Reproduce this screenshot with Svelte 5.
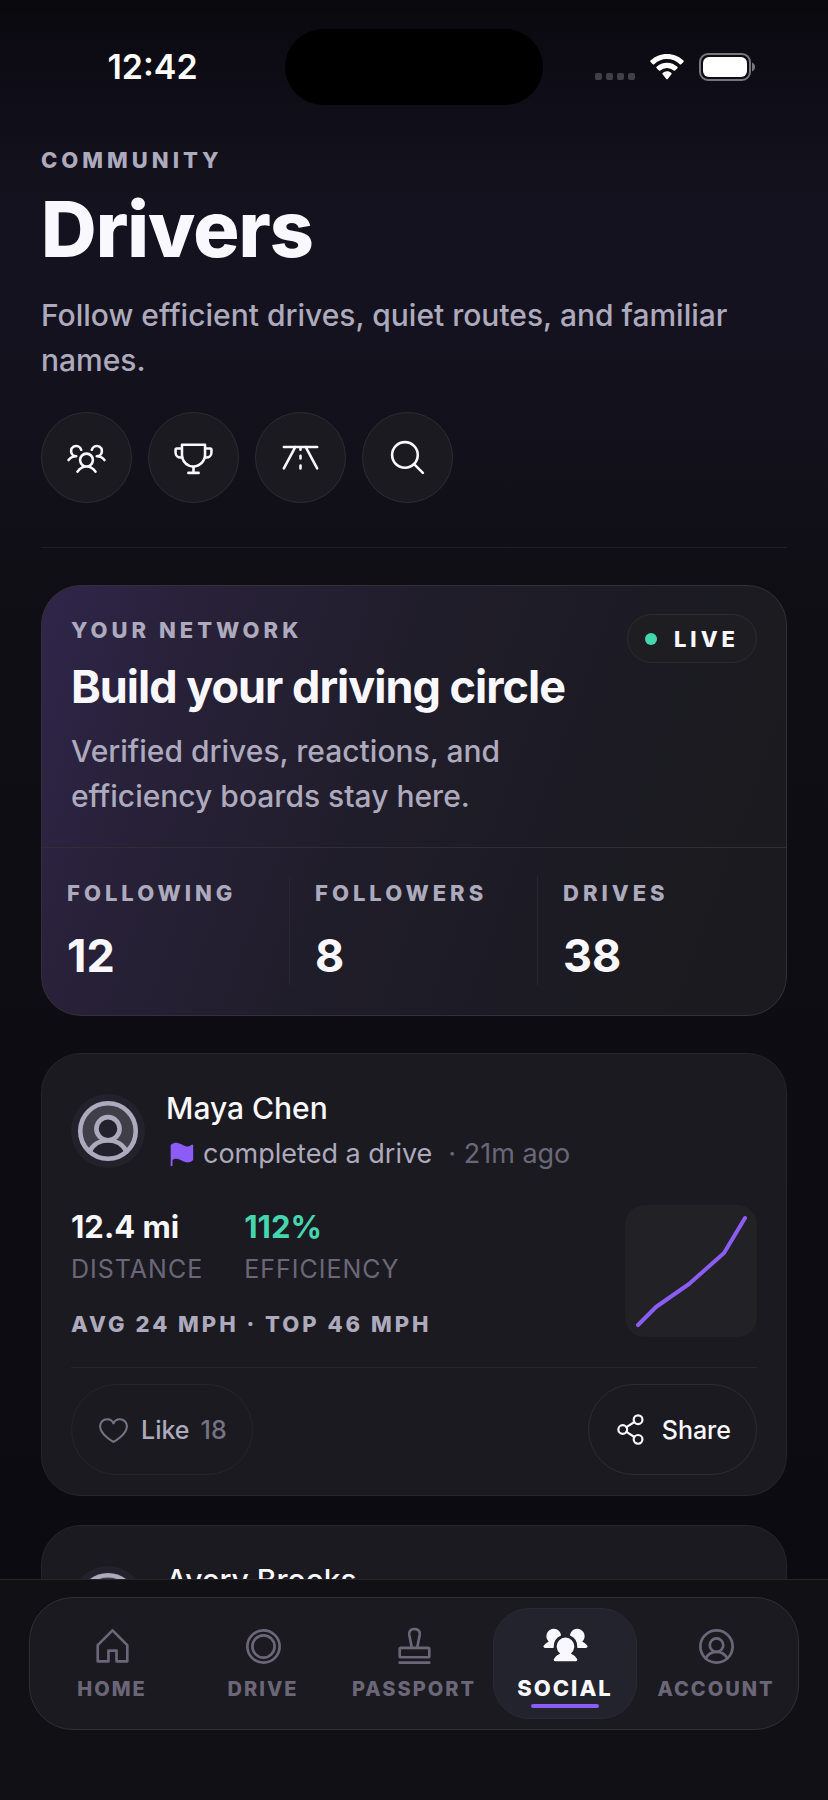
<script lang="ts">
  type IconName =
    | "users"
    | "usersFill"
    | "trophy"
    | "road"
    | "search"
    | "heart"
    | "share"
    | "flag"
    | "person"
    | "home"
    | "drive"
    | "stamp";

  type Drive = {
    driver: string;
    time: string;
    details?: {
      distance: string;
      efficiency: string;
      speeds: string;
      likes: number;
      route: [number, number][];
    };
  };

  const actions: { icon: IconName; label: string }[] = [
    { icon: "users", label: "Friends" },
    { icon: "trophy", label: "Leaderboard" },
    { icon: "road", label: "Routes" },
    { icon: "search", label: "Search" },
  ];

  const stats = [
    { label: "Following", value: 12 },
    { label: "Followers", value: 8 },
    { label: "Drives", value: 38 },
  ];

  const tabs: { id: string; icon: IconName; label: string }[] = [
    { id: "home", icon: "home", label: "Home" },
    { id: "drive", icon: "drive", label: "Drive" },
    { id: "passport", icon: "stamp", label: "Passport" },
    { id: "social", icon: "usersFill", label: "Social" },
    { id: "account", icon: "person", label: "Account" },
  ];

  const drives: Drive[] = [
    {
      driver: "Maya Chen",
      time: "21m ago",
      details: {
        distance: "12.4 mi",
        efficiency: "112%",
        speeds: "Avg 24 mph · Top 46 mph",
        likes: 18,
        route: [[13, 120], [31, 102], [64, 79], [99, 48], [120, 13]],
      },
    },
    { driver: "Avery Brooks", time: "" },
  ];

  let activeTab = $state("social");
</script>

{#snippet icon(name: IconName)}
  <svg class="icon" viewBox="0 0 256 256" aria-hidden="true">
    {#if name === "users"}
      <path class="solid" d="M244.8,150.4a8,8,0,0,1-11.2-1.6A51.6,51.6,0,0,0,192,128a8,8,0,0,1-7.37-4.89,8,8,0,0,1,0-6.22A8,8,0,0,1,192,112a24,24,0,1,0-23.24-30,8,8,0,1,1-15.5-4A40,40,0,1,1,219,117.51a67.94,67.94,0,0,1,27.43,21.68A8,8,0,0,1,244.8,150.4ZM190.92,212a8,8,0,1,1-13.84,8,57,57,0,0,0-98.16,0,8,8,0,1,1-13.84-8,72.06,72.06,0,0,1,33.74-29.92,48,48,0,1,1,58.36,0A72.06,72.06,0,0,1,190.92,212ZM128,176a32,32,0,1,0-32-32A32,32,0,0,0,128,176ZM72,120a8,8,0,0,0-8-8A24,24,0,1,1,87.24,82a8,8,0,1,0,15.5-4A40,40,0,1,0,37,117.51,67.94,67.94,0,0,0,9.6,139.19a8,8,0,1,0,12.8,9.61A51.6,51.6,0,0,1,64,128,8,8,0,0,0,72,120Z" />
    {:else if name === "usersFill"}
      <path class="solid" d="M64.12,147.8a4,4,0,0,1-4,4.2H16a8,8,0,0,1-7.8-6.17,8.35,8.35,0,0,1,1.62-6.93A67.79,67.79,0,0,1,37,117.51a40,40,0,1,1,66.46-35.8,3.94,3.94,0,0,1-2.27,4.18A64.08,64.08,0,0,0,64,144C64,145.28,64,146.54,64.12,147.8Zm182-8.91A67.76,67.76,0,0,0,219,117.51a40,40,0,1,0-66.46-35.8,3.94,3.94,0,0,0,2.27,4.18A64.08,64.08,0,0,1,192,144c0,1.28,0,2.54-.12,3.8a4,4,0,0,0,4,4.2H240a8,8,0,0,0,7.8-6.17A8.33,8.33,0,0,0,246.17,138.89Zm-89,43.18a48,48,0,1,0-58.37,0A72.13,72.13,0,0,0,65.07,212,8,8,0,0,0,72,224H184a8,8,0,0,0,6.93-12A72.15,72.15,0,0,0,157.12,182.07Z" />
    {:else if name === "trophy"}
      <path class="solid" d="M232,64H208V48a8,8,0,0,0-8-8H56a8,8,0,0,0-8,8V64H24A16,16,0,0,0,8,80V96a40,40,0,0,0,40,40h3.65A80.13,80.13,0,0,0,120,191.61V216H96a8,8,0,0,0,0,16h64a8,8,0,0,0,0-16H136V191.58c31.94-3.23,58.44-25.64,68.08-55.58H208a40,40,0,0,0,40-40V80A16,16,0,0,0,232,64ZM48,120A24,24,0,0,1,24,96V80H48v32q0,4,.39,8Zm144-8.9c0,35.52-29,64.64-64,64.9a64,64,0,0,1-64-64V56H192ZM232,96a24,24,0,0,1-24,24h-.5a81.81,81.81,0,0,0,.5-8.9V80h24Z" />
    {:else if name === "road"}
      <path d="M24 62H232M96 62 24 196M160 62l72 134M128 64v16M128 118v16M128 178v18" />
    {:else if name === "search"}
      <circle cx="112" cy="112" r="80" />
      <path d="m169 169 55 55" />
    {:else if name === "heart"}
      <path d="M128,224S24,168,24,102A54,54,0,0,1,78,48c22.59,0,41.94,12.31,50,32,8.06-19.69,27.41-32,50-32a54,54,0,0,1,54,54C232,168,128,224,128,224Z" />
    {:else if name === "share"}
      <circle cx="64" cy="128" r="32" />
      <circle cx="176" cy="200" r="32" />
      <circle cx="176" cy="56" r="32" />
      <path d="M91 145l58 38M149 73 91 111" />
    {:else if name === "flag"}
      <path class="solid" d="M232,56V176a8,8,0,0,1-2.76,6c-15.28,13.23-29.89,18-43.82,18-18.91,0-36.57-8.74-53-16.85C105.87,170,82.79,158.61,56,179.77V224a8,8,0,0,1-16,0V56a8,8,0,0,1,2.77-6h0c36-31.18,68.31-15.17,96.8-1.12C167.84,62.79,190.79,74.07,218.76,50A8,8,0,0,1,232,56Z" />
    {:else if name === "person"}
      <path class="tone" fill-rule="evenodd" d="M192.2,199.37a96,96,0,1,0-128.4,0A72,72,0,0,1,192.2,199.37ZM128,160a40,40,0,1,1,40-40A40,40,0,0,1,128,160Z" />
      <circle cx="128" cy="128" r="96" />
      <circle cx="128" cy="120" r="40" />
      <path d="M63.8,199.37a72,72,0,0,1,128.4,0" />
    {:else if name === "home"}
      <path d="M104,216V152h48v64h64V120L128,32,40,120v96Z" />
    {:else if name === "drive"}
      <circle cx="128" cy="128" r="96" />
      <circle cx="128" cy="128" r="66" />
    {:else if name === "stamp"}
      <path d="M40 224H216M112 136 96.500 56A28 28 0 0 1 124 24h8A28 28 0 0 1 159.500 56L144 136" />
      <rect x="40" y="136" width="176" height="56" rx="8" />
    {/if}
  </svg>
{/snippet}

<div class="app">
  <div class="status-bar">
    <time class="clock">12:42</time>
    <div class="island"></div>
    <div class="signals">
      <svg class="cellular" viewBox="0 0 40 28" aria-hidden="true">
        {#each [0, 11, 22, 33] as x}
          <rect {x} y="20" width="7" height="7" rx="2" />
        {/each}
      </svg>
      <svg class="wifi" viewBox="0 0 34 28" aria-hidden="true">
        <path d="M17 1c6.400 0 12.200 2.500 16.500 6.600.4.400.4 1 0 1.400l-2.300 2.300c-.4.400-1 .4-1.400 0A18.400 18.400 0 0 0 17 6.100c-5 0-9.500 2-12.800 5.200-.4.400-1 .4-1.400 0L.5 9c-.4-.4-.4-1 0-1.400C4.800 3.500 10.600 1 17 1Z" />
        <path d="M17 9.700c4 0 7.700 1.600 10.400 4.100.4.400.4 1 0 1.400L25.100 17.500c-.4.400-1 .4-1.400 0a9.900 9.900 0 0 0-13.400 0c-.4.400-1 .4-1.400 0l-2.300-2.300c-.4-.4-.4-1 0-1.400A15.200 15.200 0 0 1 17 9.700Z" />
        <path d="M17 18.300c1.700 0 3.200.6 4.400 1.600.4.400.4 1 0 1.400l-3.700 4.800c-.4.400-1 .4-1.400 0l-3.700-4.800c-.4-.4-.4-1 0-1.400a6.600 6.600 0 0 1 4.400-1.600Z" />
      </svg>
      <svg class="battery" viewBox="0 0 57 28" aria-hidden="true">
        <rect class="shell" x="1" y="1" width="50" height="26" rx="8" />
        <rect x="4" y="4" width="44" height="20" rx="6" />
        <path class="nub" d="M53 9.500c2 .8 3 2.500 3 4.500s-1 3.700-3 4.500Z" />
      </svg>
    </div>
  </div>

  <main class="content">
    <header class="page-head">
      <p class="kicker">Community</p>
      <h1>Drivers</h1>
      <p class="body-text">Follow efficient drives, quiet routes, and familiar names.</p>
      <div class="actions">
        {#each actions as action}
          <button class="round-btn" type="button" aria-label={action.label}>
            {@render icon(action.icon)}
          </button>
        {/each}
      </div>
    </header>

    <section class="network">
      <div class="network-top">
        <div class="network-copy">
          <p class="kicker">Your network</p>
          <h2>Build your driving circle</h2>
          <p class="body-text">Verified drives, reactions, and efficiency boards stay here.</p>
        </div>
        <span class="live"><span class="live-dot"></span>Live</span>
      </div>
      <div class="stats">
        {#each stats as stat}
          <div class="stat">
            <div class="kicker">{stat.label}</div>
            <div class="stat-value">{stat.value}</div>
          </div>
        {/each}
      </div>
    </section>

    <div class="feed">
      {#each drives as drive}
        <article class="card">
          <div class="card-head">
            <div class="avatar">{@render icon("person")}</div>
            <div class="who">
              <div class="name">{drive.driver}</div>
              {#if drive.time}
                <div class="event">
                  <span class="flag">{@render icon("flag")}</span>
                  <span>completed a drive</span>
                  <span class="ago">· {drive.time}</span>
                </div>
              {/if}
            </div>
          </div>

          {#if drive.details}
            <div class="summary">
              <div>
                <div class="metrics">
                  <div>
                    <div class="metric-value">{drive.details.distance}</div>
                    <div class="metric-label">Distance</div>
                  </div>
                  <div>
                    <div class="metric-value good">{drive.details.efficiency}</div>
                    <div class="metric-label">Efficiency</div>
                  </div>
                </div>
                <div class="kicker speeds">{drive.details.speeds}</div>
              </div>
              <svg class="route" viewBox="0 0 132 132" aria-hidden="true">
                <polyline points={drive.details.route.map((p) => p.join(",")).join(" ")} />
              </svg>
            </div>

            <div class="card-actions">
              <button class="pill-btn like" type="button">
                {@render icon("heart")}
                <span>Like</span>
                <span class="count">{drive.details.likes}</span>
              </button>
              <button class="pill-btn share" type="button">
                {@render icon("share")}
                <span>Share</span>
              </button>
            </div>
          {/if}
        </article>
      {/each}
    </div>
  </main>

  <div class="tab-area">
    <nav class="tabs">
      {#each tabs as tab}
        <a
          class="tab"
          class:active={activeTab === tab.id}
          href="#{tab.id}"
          onclick={() => (activeTab = tab.id)}
        >
          {@render icon(tab.icon)}
          <span class="tab-label">{tab.label}</span>
          {#if activeTab === tab.id}
            <span class="tab-line"></span>
          {/if}
        </a>
      {/each}
    </nav>
  </div>
</div>

<style>
  :global(body) {
    background: #0c0b11;
  }

  .app {
    --text: #faf8ff;
    --muted: #aeaabd;
    --dim: #6b6778;
    --accent: #8b5cf6;
    --good: #45d6b0;
    --card: #1b1a20;
    --line: #2d2c32;
    --line-soft: #26252b;
    display: flex;
    flex-direction: column;
    height: 100vh;
    overflow: hidden;
    background: linear-gradient(180deg, #09090c 0, #0c0b13 40px, #14121e 200px, #14121e 340px, #0f0e14 620px, #0b0a10 100%);
    color: var(--text);
    font-family: Inter, "Liberation Sans", sans-serif;
  }

  .app :global(*) {
    box-sizing: border-box;
  }

  h1,
  h2,
  p {
    margin: 0;
  }

  button {
    font: inherit;
    color: inherit;
    cursor: pointer;
  }

  .icon {
    display: block;
    flex: none;
    width: 41px;
    height: 41px;
    fill: none;
    stroke: currentColor;
    stroke-width: 16;
    stroke-linecap: round;
    stroke-linejoin: round;
  }

  .icon .solid {
    fill: currentColor;
    stroke: none;
  }

  .icon .tone {
    fill: none;
    stroke: none;
  }

  /* status bar */
  .status-bar {
    flex: none;
    display: grid;
    grid-template-columns: 1fr 258px 1fr;
    align-items: center;
    height: 134px;
  }

  .clock {
    justify-self: center;
    padding-left: 20px;
    font-size: 34px;
    line-height: 40px;
    font-weight: 600;
    color: #fff;
  }

  .island {
    height: 76px;
    border-radius: 38px;
    background: #000;
  }

  .signals {
    display: flex;
    align-items: center;
    justify-content: flex-end;
    gap: 15px;
    padding-right: 72px;
    fill: #fff;
  }

  .signals svg {
    flex: none;
    height: 28px;
  }

  .cellular {
    width: 40px;
    fill: #413f49;
  }

  .wifi {
    width: 34px;
  }

  .battery {
    width: 57px;
  }

  .battery .shell {
    fill: none;
    stroke: #77757e;
    stroke-width: 2;
  }

  .battery .nub {
    fill: #77757e;
  }

  /* page */
  .content {
    flex: 1;
    min-height: 0;
    overflow: hidden;
    padding: 12px 41px 0;
  }

  .kicker {
    font-size: 22px;
    line-height: 28px;
    font-weight: 800;
    letter-spacing: 4px;
    text-transform: uppercase;
    color: var(--muted);
  }

  .body-text {
    font-size: 30px;
    line-height: 45px;
    font-weight: 500;
    color: var(--muted);
  }

  .page-head {
    padding-bottom: 44px;
    border-bottom: 1px solid #1f1e28;
  }

  h1 {
    margin: 13px 0 22px;
    font-size: 77px;
    line-height: 84px;
    font-weight: 800;
    letter-spacing: -1px;
  }

  .actions {
    display: flex;
    gap: 16px;
    margin-top: 29px;
  }

  .round-btn {
    display: grid;
    place-items: center;
    width: 91px;
    height: 91px;
    padding: 0;
    border: 1px solid var(--line);
    border-radius: 50%;
    background: var(--card);
  }

  /* network card */
  .network {
    margin-top: 37px;
    border: 1px solid #323038;
    border-radius: 40px;
    background: linear-gradient(110deg, #2f264b 0%, #282139 18%, #201d2a 45%, #1c1b24 68%, #1b1b1f 88%);
  }

  .network-top {
    display: flex;
    justify-content: space-between;
    align-items: flex-start;
    padding: 28px 29px;
    border-bottom: 1px solid #2f2d36;
  }

  .network-copy {
    max-width: 500px;
    padding-top: 2px;
  }

  h2 {
    margin: 16px 0 15px;
    font-size: 45px;
    line-height: 54px;
    font-weight: 700;
    letter-spacing: -1px;
    white-space: nowrap;
  }

  .live {
    display: flex;
    align-items: center;
    gap: 17px;
    height: 49px;
    padding: 0 17px;
    border: 1px solid var(--line);
    border-radius: 25px;
    background: #1e1e22;
    font-size: 22px;
    font-weight: 800;
    letter-spacing: 4px;
    text-transform: uppercase;
  }

  .live-dot {
    width: 12px;
    height: 12px;
    border-radius: 50%;
    background: var(--good);
  }

  .stats {
    display: grid;
    grid-template-columns: repeat(3, 1fr);
    padding: 29px 0 30px;
  }

  .stat {
    padding: 2px 0 2px 25px;
    border-right: 1px solid #292731;
  }

  .stat:last-child {
    border-right: 0;
  }

  .stat-value {
    margin-top: 22px;
    font-size: 45px;
    line-height: 54px;
    font-weight: 700;
  }

  /* feed */
  .feed {
    display: flex;
    flex-direction: column;
    gap: 29px;
    margin-top: 37px;
  }

  .card {
    padding: 32px 29px 20px;
    border: 1px solid var(--line-soft);
    border-radius: 40px;
    background: var(--card);
  }

  .card-head {
    display: flex;
    align-items: flex-start;
    gap: 21px;
    line-height: 45px;
  }

  .avatar {
    margin: 8px 0;
    border-radius: 50%;
    background: #23222c;
    color: var(--muted);
  }

  .avatar :global(.icon) {
    width: 74px;
    height: 74px;
  }

  .avatar :global(.tone) {
    fill: #403e49;
  }

  .name {
    font-size: 30px;
    font-weight: 500;
  }

  .event {
    display: flex;
    align-items: center;
    gap: 7px;
    font-size: 27px;
    color: var(--muted);
  }

  .flag {
    color: var(--accent);
  }

  .flag :global(.icon) {
    width: 30px;
    height: 30px;
  }

  .ago {
    margin-left: 9px;
    color: var(--dim);
  }

  .summary {
    display: flex;
    justify-content: space-between;
    margin-top: 29px;
    padding-bottom: 29px;
    border-bottom: 1px solid #26252b;
  }

  .metrics {
    display: flex;
    gap: 41px;
  }

  .metric-value {
    font-size: 31px;
    line-height: 44px;
    font-weight: 700;
  }

  .metric-value.good {
    color: var(--good);
  }

  .metric-label {
    font-size: 25px;
    line-height: 40px;
    letter-spacing: 1px;
    text-transform: uppercase;
    color: var(--dim);
  }

  .speeds {
    margin-top: 21px;
    letter-spacing: 3px;
  }

  .route {
    flex: none;
    width: 132px;
    height: 132px;
    border-radius: 20px;
    background: #222126;
  }

  .route polyline {
    fill: none;
    stroke: var(--accent);
    stroke-width: 4;
    stroke-linecap: round;
    stroke-linejoin: round;
  }

  .card-actions {
    display: flex;
    justify-content: space-between;
    padding-top: 16px;
  }

  .pill-btn {
    display: flex;
    align-items: center;
    gap: 13px;
    height: 91px;
    padding: 0 25px;
    border: 1px solid var(--line);
    border-radius: 46px;
    background: none;
    font-size: 25px;
    font-weight: 500;
  }

  .pill-btn :global(.icon) {
    width: 35px;
    height: 35px;
  }

  .like {
    gap: 11px;
    border-color: var(--line-soft);
    color: var(--muted);
  }

  .like :global(.icon) {
    width: 33px;
    height: 33px;
  }

  .like :global(.icon),
  .count {
    color: #777383;
  }

  /* bottom tabs */
  .tab-area {
    flex: none;
    padding: 17px 29px 70px;
    border-top: 1px solid #25242a;
    background: #111014;
  }

  .tabs {
    display: grid;
    grid-template-columns: repeat(5, 1fr);
    gap: 7px;
    padding: 10px;
    border: 1px solid #302f35;
    border-radius: 44px;
    background: var(--card);
  }

  .tab {
    display: flex;
    flex-direction: column;
    align-items: center;
    justify-content: center;
    gap: 7px;
    min-width: 0;
    height: 111px;
    border: 1px solid transparent;
    border-radius: 36px;
    color: var(--dim);
    text-decoration: none;
  }

  .tab :global(.icon) {
    width: 43px;
    height: 43px;
  }

  .tab-label {
    font-size: 20px;
    line-height: 28px;
    font-weight: 800;
    letter-spacing: 2px;
    text-transform: uppercase;
  }

  .tab.active {
    gap: 2px;
    border-color: #2b2a34;
    background: #23232d;
    color: var(--text);
  }

  .tab.active :global(.icon) {
    width: 47px;
    height: 47px;
    margin-bottom: 5px;
  }

  .tab.active .tab-label {
    font-size: 22px;
  }

  .tab-line {
    width: 68px;
    height: 4px;
    border-radius: 2px;
    background: var(--accent);
  }
</style>
